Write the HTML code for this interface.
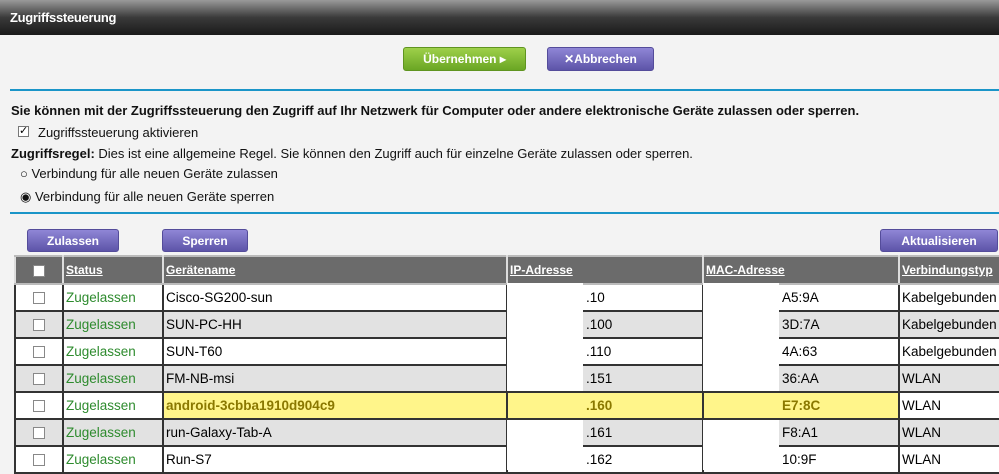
<!DOCTYPE html>
<html><head><meta charset="utf-8"><style>
*{margin:0;padding:0;box-sizing:border-box}
body{width:999px;height:470px;overflow:hidden;background:#f3f3f3;font-family:"Liberation Sans",sans-serif;position:relative}
.a{position:absolute}
.hdr{left:0;top:0;width:999px;height:35px;background:linear-gradient(#9a9a9a,#3a3a3a 50%,#1a1a1a);color:#fff;font-weight:bold;font-size:13px;padding:10px 0 0 10px;letter-spacing:-0.3px}
.btn{border-radius:3px;color:#fff;font-weight:bold;font-size:12px;text-align:center;line-height:22px}
.pur{background:linear-gradient(#8f86d6,#5d54a8);border:1px solid #544c9a}
.grn{background:linear-gradient(#9ed04a,#6aa624);border:1px solid #5f9420}
.line{height:2px;background:#1a95c8;left:10px;width:989px}
.t{font-size:13px;color:#111;white-space:nowrap}
.cb{width:11px;height:11px;border:1px solid #777;background:#fff}
table{position:absolute;left:14px;top:255px;border-collapse:collapse;font-size:13.5px;table-layout:fixed;width:990px}
td,th{border:2px solid #333;height:27px;padding:0 2px;white-space:nowrap;overflow:hidden;text-align:left;line-height:20px}
th{background:#6b6b6b;color:#fff;text-decoration:underline;font-size:12px;height:28px;border-color:#bbb #ddd}
td.s{color:#2e8b2e}
tr.w td{background:#fff}tr.g td{background:#e2e2e2}
tr.y td.hl{background:#fff58a;color:#8a7800;font-weight:bold}
td.ip{padding-left:78px}
.mask{position:absolute;background:#fff;width:76px}
.ckc{text-align:center}
.ckc span{display:inline-block;width:12px;height:12px;border:1px solid #888;background:#fff;vertical-align:middle}
</style></head><body>
<div class="a hdr">Zugriffssteuerung</div>
<div class="a btn grn" style="left:403px;top:47px;width:123px;height:24px">Übernehmen ▸</div>
<div class="a btn pur" style="left:547px;top:47px;width:107px;height:24px">✕Abbrechen</div>
<div class="a line" style="top:89px"></div>
<div class="a t" style="left:11px;top:103px;font-weight:bold">Sie können mit der Zugriffssteuerung den Zugriff auf Ihr Netzwerk für Computer oder andere elektronische Geräte zulassen oder sperren.</div>
<div class="a cb" style="left:18px;top:126px;font-size:11px;line-height:9px;text-align:center">✓</div>
<div class="a t" style="left:38px;top:125px">Zugriffssteuerung aktivieren</div>
<div class="a t" style="left:11px;top:146px"><b>Zugriffsregel:</b> Dies ist eine allgemeine Regel. Sie können den Zugriff auch für einzelne Geräte zulassen oder sperren.</div>
<div class="a t" style="left:20px;top:166px">○ Verbindung für alle neuen Geräte zulassen</div>
<div class="a t" style="left:20px;top:189px">◉ Verbindung für alle neuen Geräte sperren</div>
<div class="a line" style="top:212px"></div>
<div class="a btn pur" style="left:27px;top:229px;width:92px;height:23px">Zulassen</div>
<div class="a btn pur" style="left:162px;top:229px;width:86px;height:23px">Sperren</div>
<div class="a btn pur" style="left:880px;top:229px;width:118px;height:23px">Aktualisieren</div>
<table>
<colgroup><col style="width:48px"><col style="width:100px"><col style="width:344px"><col style="width:196px"><col style="width:196px"><col style="width:106px"></colgroup>
<tr><th class="ckc"><span></span></th><th>Status</th><th>Gerätename</th><th>IP-Adresse</th><th>MAC-Adresse</th><th>Verbindungstyp</th></tr>
<tr class="w"><td class="ckc"><span></span></td><td class="s">Zugelassen</td><td>Cisco-SG200-sun</td><td class="ip">.10</td><td class="ip">A5:9A</td><td>Kabelgebunden</td></tr>
<tr class="g"><td class="ckc"><span></span></td><td class="s">Zugelassen</td><td>SUN-PC-HH</td><td class="ip">.100</td><td class="ip">3D:7A</td><td>Kabelgebunden</td></tr>
<tr class="w"><td class="ckc"><span></span></td><td class="s">Zugelassen</td><td>SUN-T60</td><td class="ip">.110</td><td class="ip">4A:63</td><td>Kabelgebunden</td></tr>
<tr class="g"><td class="ckc"><span></span></td><td class="s">Zugelassen</td><td>FM-NB-msi</td><td class="ip">.151</td><td class="ip">36:AA</td><td>WLAN</td></tr>
<tr class="w y"><td class="ckc"><span></span></td><td class="s">Zugelassen</td><td class="hl">android-3cbba1910d904c9</td><td class="ip hl">.160</td><td class="ip hl">E7:8C</td><td>WLAN</td></tr>
<tr class="g"><td class="ckc"><span></span></td><td class="s">Zugelassen</td><td>run-Galaxy-Tab-A</td><td class="ip">.161</td><td class="ip">F8:A1</td><td>WLAN</td></tr>
<tr class="w"><td class="ckc"><span></span></td><td class="s">Zugelassen</td><td>Run-S7</td><td class="ip">.162</td><td class="ip">10:9F</td><td>WLAN</td></tr>
</table>
<div class="mask" style="left:507px;top:283px;height:108px"></div>
<div class="mask" style="left:703px;top:283px;height:108px"></div>
<div class="mask" style="left:507px;top:420px;height:50px"></div>
<div class="mask" style="left:703px;top:420px;height:50px"></div>
</body></html>
